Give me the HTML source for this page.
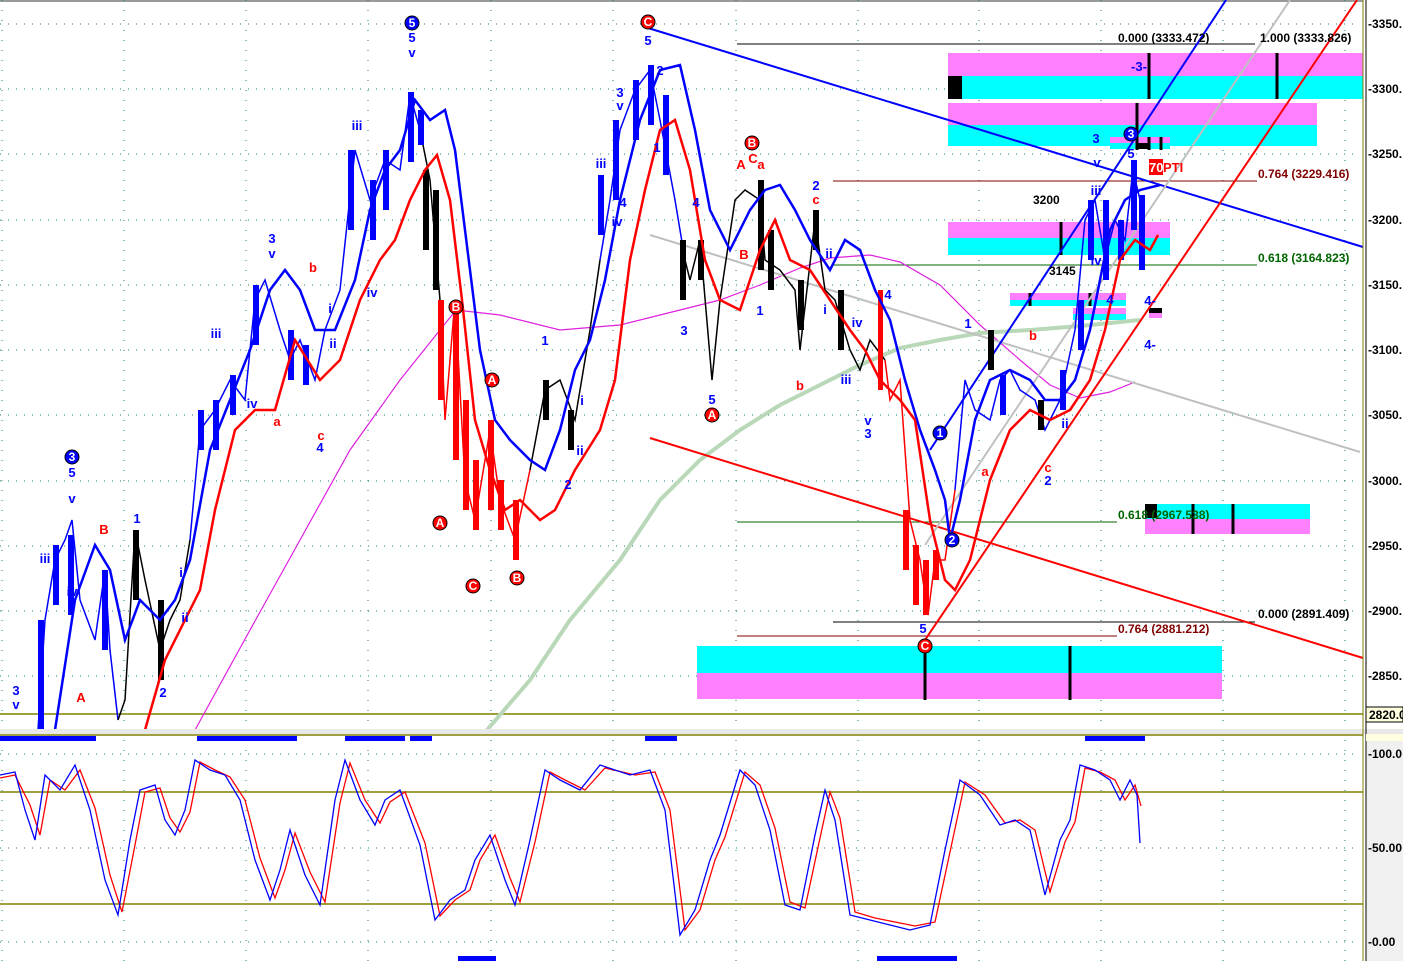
<!DOCTYPE html>
<html><head><meta charset="utf-8"><style>
html,body{margin:0;padding:0;background:#fff;}
svg{display:block;font-family:"Liberation Sans",sans-serif;font-weight:bold;}
</style></head><body>
<svg width="1403" height="961" viewBox="0 0 1403 961" xmlns="http://www.w3.org/2000/svg">
<rect width="1403" height="961" fill="#fff"/>
<rect x="1366" y="733" width="37" height="228" fill="#f0f0f0"/>
<line x1="0" y1="1" x2="1363" y2="1" stroke="#999" stroke-width="2"/>
<g stroke="#1a7a7a" stroke-width="1" stroke-dasharray="1,7">
<line x1="0" y1="24" x2="1360" y2="24"/><line x1="0" y1="89" x2="1360" y2="89"/><line x1="0" y1="154" x2="1360" y2="154"/><line x1="0" y1="220" x2="1360" y2="220"/><line x1="0" y1="285" x2="1360" y2="285"/><line x1="0" y1="350" x2="1360" y2="350"/><line x1="0" y1="415" x2="1360" y2="415"/><line x1="0" y1="481" x2="1360" y2="481"/><line x1="0" y1="546" x2="1360" y2="546"/><line x1="0" y1="611" x2="1360" y2="611"/><line x1="0" y1="676" x2="1360" y2="676"/>
<line x1="0" y1="754" x2="1360" y2="754"/><line x1="0" y1="848" x2="1360" y2="848"/><line x1="0" y1="942" x2="1360" y2="942"/>
</g>
<g stroke="#1a7a7a" stroke-width="1" stroke-dasharray="1,9">
<line x1="2" y1="0" x2="2" y2="961"/><line x1="124" y1="0" x2="124" y2="961"/><line x1="246" y1="0" x2="246" y2="961"/><line x1="368" y1="0" x2="368" y2="961"/><line x1="491" y1="0" x2="491" y2="961"/><line x1="613" y1="0" x2="613" y2="961"/><line x1="736" y1="0" x2="736" y2="961"/><line x1="858" y1="0" x2="858" y2="961"/><line x1="979" y1="0" x2="979" y2="961"/><line x1="1101" y1="0" x2="1101" y2="961"/><line x1="1223" y1="0" x2="1223" y2="961"/><line x1="1345" y1="0" x2="1345" y2="961"/>
</g>
<rect x="948" y="53" width="415" height="23" fill="#ff80ff"/><rect x="948" y="76" width="415" height="23" fill="#00ffff"/>
<rect x="948" y="76" width="14" height="23" fill="#000"/>
<rect x="948" y="103" width="369" height="22" fill="#ff80ff"/><rect x="948" y="125" width="369" height="21" fill="#00ffff"/>
<rect x="1110" y="137" width="60" height="6" fill="#ff80ff"/><rect x="1110" y="143" width="60" height="6" fill="#00ffff"/>
<rect x="948" y="222" width="222" height="16" fill="#ff80ff"/><rect x="948" y="238" width="222" height="17" fill="#00ffff"/>
<rect x="1010" y="293" width="116" height="7" fill="#ff80ff"/><rect x="1010" y="300" width="116" height="6" fill="#00ffff"/>
<rect x="1073" y="308" width="53" height="6" fill="#ff80ff"/><rect x="1073" y="314" width="53" height="6" fill="#00ffff"/>
<rect x="1149" y="308" width="13" height="9" fill="#000"/><rect x="1149" y="313" width="13" height="5" fill="#ff80ff"/>
<rect x="1145" y="504" width="165" height="15" fill="#00ffff"/><rect x="1145" y="519" width="165" height="15" fill="#ff80ff"/>
<rect x="1145" y="504" width="12" height="14" fill="#000"/>
<rect x="697" y="646" width="525" height="27" fill="#00ffff"/><rect x="697" y="673" width="525" height="26" fill="#ff80ff"/>
<g stroke="#000" stroke-width="3">
<line x1="1149" y1="53" x2="1149" y2="99"/><line x1="1277" y1="53" x2="1277" y2="99"/>
<line x1="1137" y1="103" x2="1137" y2="150"/><line x1="1149" y1="137" x2="1149" y2="150"/><line x1="1161" y1="137" x2="1161" y2="150"/>
<line x1="1061" y1="222" x2="1061" y2="255"/><line x1="1120" y1="222" x2="1120" y2="255"/>
<line x1="1030" y1="293" x2="1030" y2="306"/><line x1="1090" y1="293" x2="1090" y2="306"/>
<line x1="1193" y1="504" x2="1193" y2="534"/><line x1="1233" y1="504" x2="1233" y2="534"/>
<line x1="925" y1="646" x2="925" y2="700"/><line x1="1070" y1="646" x2="1070" y2="700"/>
</g>
<rect x="1137" y="143" width="13" height="6" fill="#000"/>
<line x1="737" y1="44" x2="1255" y2="44" stroke="#000"/>
<line x1="833" y1="181" x2="1257" y2="181" stroke="#800000"/>
<line x1="833" y1="265" x2="1257" y2="265" stroke="#006400"/>
<line x1="737" y1="522" x2="1117" y2="522" stroke="#006400"/>
<line x1="833" y1="622" x2="1255" y2="622" stroke="#000"/>
<line x1="737" y1="636" x2="1117" y2="636" stroke="#800000"/>
<line x1="0" y1="714" x2="1363" y2="714" stroke="#808000" stroke-width="1.5"/>
<polyline fill="none" stroke="#e020e0" stroke-width="1.2" points="195,730 250,630 300,540 350,450 400,380 440,330 456,310 500,315 560,330 620,325 660,315 720,300 760,285 800,268 830,258 870,255 900,262 940,285 980,325 1020,360 1050,385 1080,398 1110,392 1135,382"/>
<polyline fill="none" stroke="#b8d8b8" stroke-width="4" points="487,730 530,680 570,620 620,560 660,500 700,460 740,430 780,405 820,385 860,365 900,348 940,340 980,333 1030,330 1080,326 1140,320"/>
<line x1="648" y1="28" x2="1363" y2="247" stroke="#0000ff" stroke-width="2"/>
<line x1="650" y1="438" x2="1363" y2="658" stroke="#ff0000" stroke-width="2"/>
<line x1="650" y1="235" x2="1360" y2="452" stroke="#c0c0c0" stroke-width="2"/>
<line x1="925" y1="640" x2="1357" y2="0" stroke="#ff0000" stroke-width="2"/>
<line x1="930" y1="450" x2="1226" y2="0" stroke="#0000ff" stroke-width="2"/>
<line x1="925" y1="545" x2="1290" y2="0" stroke="#c0c0c0" stroke-width="2"/>
<!-- price -->
<polyline fill="none" stroke="#0000ff" stroke-width="1.5" points="38,730 45,620 55,560 65,540 72,520 80,600 95,640 105,570 110,650 118,720"/>
<polyline fill="none" stroke="#000" stroke-width="1.5" points="118,720 125,700 135,530 145,580 160,650 170,620 180,600 190,540"/>
<polyline fill="none" stroke="#0000ff" stroke-width="1.5" points="190,540 200,430 215,410 230,380 245,400 255,300 265,280 280,330 290,360 300,340 315,380 325,330 340,290 355,150 370,200 385,160 400,170 410,95 420,130"/>
<polyline fill="none" stroke="#000" stroke-width="1.5" points="420,130 430,180 440,300"/>
<polyline fill="none" stroke="#ff0000" stroke-width="1.5" points="440,300 445,420 455,300 465,480 475,520 490,430 500,500 515,540 530,470"/>
<polyline fill="none" stroke="#000" stroke-width="1.5" points="530,470 545,390 560,380 575,420 590,330 600,260"/>
<polyline fill="none" stroke="#0000ff" stroke-width="1.5" points="600,260 610,200 620,130 635,90 650,70 660,120 675,200 685,260"/>
<polyline fill="none" stroke="#000" stroke-width="1.5" points="685,260 690,280 700,240 712,380 720,300 735,200 745,190 760,200 765,260 780,270 795,290 800,350 815,220 825,290 835,300 850,350 860,370 870,340 885,360"/>
<polyline fill="none" stroke="#ff0000" stroke-width="1.5" points="885,360 890,400 900,380 910,520 920,560 928,615 935,560 945,560 955,490"/>
<polyline fill="none" stroke="#0000ff" stroke-width="1.5" points="955,490 965,380 975,410 990,420 1000,380 1010,370 1020,390 1035,400 1045,430 1060,400 1075,330 1085,220 1095,200 1105,260 1115,220 1125,240 1133,170 1140,200 1143,265"/>
<!-- candle bodies -->
<g fill="#0000ff">
<rect x="38" y="620" width="6" height="110"/><rect x="53" y="545" width="6" height="60"/><rect x="68" y="535" width="6" height="80"/><rect x="102" y="570" width="6" height="80"/>
<rect x="198" y="410" width="6" height="40"/><rect x="213" y="400" width="6" height="50"/><rect x="230" y="375" width="6" height="40"/><rect x="253" y="285" width="6" height="60"/><rect x="288" y="330" width="6" height="50"/><rect x="303" y="345" width="6" height="40"/>
<rect x="348" y="150" width="6" height="80"/><rect x="370" y="180" width="6" height="60"/><rect x="383" y="150" width="6" height="60"/><rect x="408" y="92" width="6" height="70"/><rect x="418" y="110" width="6" height="35"/>
<rect x="598" y="175" width="6" height="60"/><rect x="613" y="120" width="6" height="80"/><rect x="633" y="80" width="6" height="60"/><rect x="648" y="65" width="6" height="60"/><rect x="663" y="95" width="6" height="80"/>
<rect x="1078" y="300" width="6" height="50"/><rect x="1088" y="200" width="6" height="60"/><rect x="1103" y="200" width="6" height="80"/><rect x="1118" y="220" width="6" height="40"/><rect x="1131" y="160" width="6" height="70"/><rect x="1139" y="195" width="6" height="75"/>
<rect x="1000" y="375" width="6" height="40"/><rect x="1060" y="370" width="6" height="40"/>
</g>
<g fill="#000">
<rect x="133" y="530" width="6" height="70"/><rect x="158" y="600" width="6" height="80"/><rect x="423" y="170" width="6" height="80"/><rect x="433" y="190" width="6" height="100"/>
<rect x="543" y="380" width="6" height="40"/><rect x="568" y="410" width="6" height="40"/><rect x="680" y="240" width="6" height="60"/><rect x="698" y="240" width="6" height="40"/>
<rect x="758" y="180" width="6" height="90"/><rect x="768" y="230" width="6" height="60"/><rect x="798" y="280" width="6" height="50"/><rect x="813" y="210" width="6" height="40"/><rect x="838" y="290" width="6" height="60"/>
<rect x="988" y="330" width="6" height="40"/><rect x="1038" y="400" width="6" height="30"/>
</g>
<g fill="#ff0000">
<rect x="438" y="300" width="6" height="100"/><rect x="453" y="310" width="6" height="150"/><rect x="463" y="400" width="6" height="110"/><rect x="473" y="460" width="6" height="70"/><rect x="488" y="420" width="6" height="90"/><rect x="498" y="480" width="6" height="50"/><rect x="513" y="500" width="6" height="60"/>
<rect x="878" y="290" width="5" height="100"/><rect x="903" y="510" width="6" height="60"/><rect x="913" y="545" width="6" height="60"/><rect x="923" y="560" width="6" height="55"/><rect x="933" y="550" width="6" height="30"/>
</g>
<polyline fill="none" stroke="#0000ff" stroke-width="2.5" points="55,730 75,600 95,545 110,570 125,640 140,600 160,620 175,600 190,560 210,450 230,400 250,350 270,290 285,270 300,290 315,330 335,330 355,280 370,210 385,170 400,150 415,100 430,120 445,110 455,150 465,230 480,350 495,420 510,440 530,460 545,470 560,430 575,370 590,340 605,280 620,200 640,120 660,70 680,65 695,130 710,210 730,250 750,210 765,190 780,185 795,210 810,240 830,270 845,240 860,250 875,290 890,320 905,380 920,430 935,470 945,500 950,540 960,500 975,420 990,380 1010,370 1030,380 1045,400 1060,400 1075,380 1090,330 1100,280 1110,230 1125,200 1140,190 1160,185"/>
<polyline fill="none" stroke="#ff0000" stroke-width="2.5" points="145,730 165,660 185,620 200,590 215,510 235,430 255,410 275,410 295,340 320,380 340,360 360,300 380,260 395,240 410,200 425,170 437,155 450,200 462,300 475,420 490,470 505,510 520,500 540,520 555,510 575,470 600,430 615,380 630,260 645,190 660,130 675,120 690,170 705,260 720,300 740,310 760,250 775,220 790,260 810,270 830,300 850,330 865,350 880,380 900,400 915,420 930,520 945,580 955,590 970,560 990,480 1010,430 1030,410 1050,420 1070,410 1090,380 1105,330 1120,260 1135,240 1150,250 1158,235"/>
<g font-size="12">
<text x="1118" y="42" fill="#000">0.000 (3333.472)</text>
<text x="1260" y="42" fill="#000">1.000 (3333.826)</text>
<text x="1258" y="178" fill="#800000">0.764 (3229.416)</text>
<text x="1258" y="262" fill="#006400">0.618 (3164.823)</text>
<text x="1118" y="519" fill="#006400">0.618 (2967.538)</text>
<text x="1258" y="618" fill="#000">0.000 (2891.409)</text>
<text x="1118" y="633" fill="#800000">0.764 (2881.212)</text>
<text x="1033" y="204" fill="#000">3200</text>
<text x="1049" y="275" fill="#000">3145</text>
</g>
<rect x="1149" y="159" width="14" height="16" fill="#ff0000"/>
<text x="1149" y="172" font-size="13" fill="#fff">70</text><text x="1163" y="172" font-size="13" fill="#ff0000">PTI</text>
<g font-size="13" fill="#0000ff" text-anchor="middle">
<text x="16" y="695">3</text><text x="16" y="709">v</text>
<text x="72" y="477">5</text><text x="72" y="503">v</text>
<text x="45" y="563">iii</text><text x="72" y="596">iv</text>
<text x="137" y="523">1</text><text x="163" y="697">2</text><text x="185" y="622">ii</text><text x="181" y="577">i</text>
<text x="216" y="338">iii</text><text x="252" y="408">iv</text><text x="272" y="243">3</text><text x="272" y="258">v</text>
<text x="330" y="313">i</text><text x="333" y="348">ii</text><text x="320" y="452">4</text>
<text x="357" y="130">iii</text><text x="372" y="297">iv</text><text x="412" y="42">5</text><text x="412" y="57">v</text>
<text x="545" y="345">1</text><text x="568" y="489">2</text><text x="580" y="455">ii</text><text x="582" y="405">i</text>
<text x="620" y="97">3</text><text x="620" y="110">v</text><text x="601" y="168">iii</text><text x="617" y="226">iv</text><text x="623" y="207">4</text>
<text x="648" y="45">5</text><text x="660" y="75">2</text><text x="657" y="152">1</text><text x="696" y="207">4</text><text x="684" y="335">3</text><text x="712" y="404">5</text>
<text x="816" y="190">2</text><text x="829" y="258">ii</text><text x="825" y="314">i</text><text x="760" y="315">1</text>
<text x="888" y="299">4</text><text x="857" y="327">iv</text><text x="846" y="384">iii</text><text x="868" y="425">v</text><text x="868" y="438">3</text>
<text x="968" y="328">1</text><text x="923" y="633">5</text><text x="1048" y="485">2</text><text x="1096" y="195">iii</text><text x="1097" y="167">v</text><text x="1096" y="265">iv</text><text x="1065" y="428">ii</text>
<text x="1096" y="143">3</text><text x="1139" y="71">-3-</text><text x="1131" y="158">5</text>
<text x="1110" y="304">4</text><text x="1150" y="305">4-</text><text x="1150" y="349">4-</text>
</g>
<g font-size="13" fill="#ff0000" text-anchor="middle">
<text x="104" y="534">B</text><text x="81" y="702">A</text><text x="277" y="426">a</text><text x="313" y="272">b</text><text x="321" y="440">c</text>
<text x="741" y="169">A</text><text x="753" y="163">C</text><text x="761" y="169">a</text><text x="744" y="259">B</text><text x="816" y="204">c</text><text x="800" y="390">b</text>
<text x="985" y="476">a</text><text x="1033" y="340">b</text><text x="1048" y="472">c</text>
</g>
<g font-size="12" text-anchor="middle">
<g fill="#0000ff" stroke="#000" stroke-width="1"><circle cx="72" cy="457" r="7"/><circle cx="412" cy="23" r="7"/><circle cx="940" cy="433" r="7"/><circle cx="952" cy="540" r="7"/><circle cx="1131" cy="134" r="7"/></g>
<g fill="#fff"><text x="72" y="461">3</text><text x="412" y="27">5</text><text x="940" y="437">1</text><text x="952" y="544">2</text><text x="1131" y="138">3</text></g>
<g fill="#ff0000" stroke="#000" stroke-width="1"><circle cx="648" cy="22" r="7"/><circle cx="456" cy="307" r="7"/><circle cx="492" cy="380" r="7"/><circle cx="440" cy="523" r="7"/><circle cx="473" cy="586" r="7"/><circle cx="517" cy="578" r="7"/><circle cx="712" cy="415" r="7"/><circle cx="752" cy="143" r="7"/><circle cx="925" cy="646" r="7"/></g>
<g fill="#fff"><text x="648" y="26">C</text><text x="456" y="311">B</text><text x="492" y="384">A</text><text x="440" y="527">A</text><text x="473" y="590">C</text><text x="517" y="582">B</text><text x="712" y="419">A</text><text x="752" y="147">B</text><text x="925" y="650">C</text></g>
</g>
<rect x="0" y="729" width="1403" height="5" fill="#e8e8e8"/>
<line x1="0" y1="735" x2="1363" y2="735" stroke="#808000" stroke-width="1.5"/>
<g fill="#0000ff"><rect x="0" y="736" width="96" height="5"/><rect x="197" y="736" width="100" height="5"/><rect x="345" y="736" width="60" height="5"/><rect x="410" y="736" width="22" height="5"/><rect x="645" y="736" width="32" height="5"/><rect x="1085" y="736" width="60" height="5"/><rect x="458" y="956" width="38" height="5"/><rect x="877" y="956" width="80" height="5"/></g>
<line x1="0" y1="792" x2="1363" y2="792" stroke="#808000" stroke-width="1.5"/>
<line x1="0" y1="904" x2="1363" y2="904" stroke="#808000" stroke-width="1.5"/>
<polyline fill="none" stroke="#ff0000" stroke-width="1.3" points="0,778 15,775 30,805 40,835 50,780 65,790 80,770 95,808 110,875 122,912 135,845 145,792 160,788 170,818 180,832 190,812 200,762 215,770 230,777 245,800 260,858 275,898 285,870 295,833 310,872 325,902 340,803 350,763 365,800 380,823 390,802 405,792 425,843 440,916 455,900 470,890 480,860 495,835 510,878 520,902 535,842 550,772 565,780 585,790 605,768 635,775 655,772 670,810 685,930 700,910 715,860 725,837 745,772 760,785 775,828 790,902 805,908 820,838 830,792 840,818 855,912 875,918 895,922 915,926 935,922 950,852 965,782 985,795 1005,823 1020,820 1035,830 1050,892 1065,842 1075,822 1085,768 1100,772 1115,780 1125,800 1135,785 1141,806"/>
<polyline fill="none" stroke="#0000ff" stroke-width="1.3" points="0,775 15,772 25,810 35,840 45,775 60,790 75,765 90,810 105,880 118,915 130,840 140,790 155,785 165,820 175,835 185,810 195,760 210,770 225,775 240,800 255,860 270,900 280,870 290,830 305,875 320,905 335,800 345,760 360,800 375,825 385,800 400,790 420,845 435,920 450,900 465,890 475,860 490,835 505,880 515,905 530,840 545,770 560,780 580,790 600,765 630,775 650,770 665,810 680,935 695,910 710,860 720,835 740,770 755,785 770,830 785,905 800,910 815,835 825,790 835,820 850,915 870,920 890,925 910,930 930,925 945,850 960,780 980,795 1000,825 1015,820 1030,830 1045,895 1060,840 1070,820 1080,765 1095,770 1110,780 1120,800 1130,780 1137,795 1140,843"/>
<line x1="1363" y1="0" x2="1363" y2="961" stroke="#808000" stroke-width="1"/>
<line x1="1366" y1="0" x2="1366" y2="961" stroke="#000" stroke-width="1"/>
<g font-size="12" fill="#000">
<text x="1368" y="28">-3350.</text><text x="1368" y="93">-3300.</text><text x="1368" y="158">-3250.</text><text x="1368" y="224">-3200.</text><text x="1368" y="289">-3150.</text><text x="1368" y="354">-3100.</text><text x="1368" y="419">-3050.</text><text x="1368" y="485">-3000.</text><text x="1368" y="550">-2950.</text><text x="1368" y="615">-2900.</text><text x="1368" y="680">-2850.</text>
<text x="1368" y="758">-100.0</text><text x="1368" y="852">-50.00</text><text x="1368" y="946">-0.00</text>
</g>
<rect x="1366" y="707" width="37" height="15" fill="#ffffe0" stroke="#000"/>
<text x="1369" y="719" font-size="12" fill="#000">2820.0</text>
<rect x="1366" y="734" width="37" height="7" fill="#ffffe0"/>
</svg>
</body></html>
